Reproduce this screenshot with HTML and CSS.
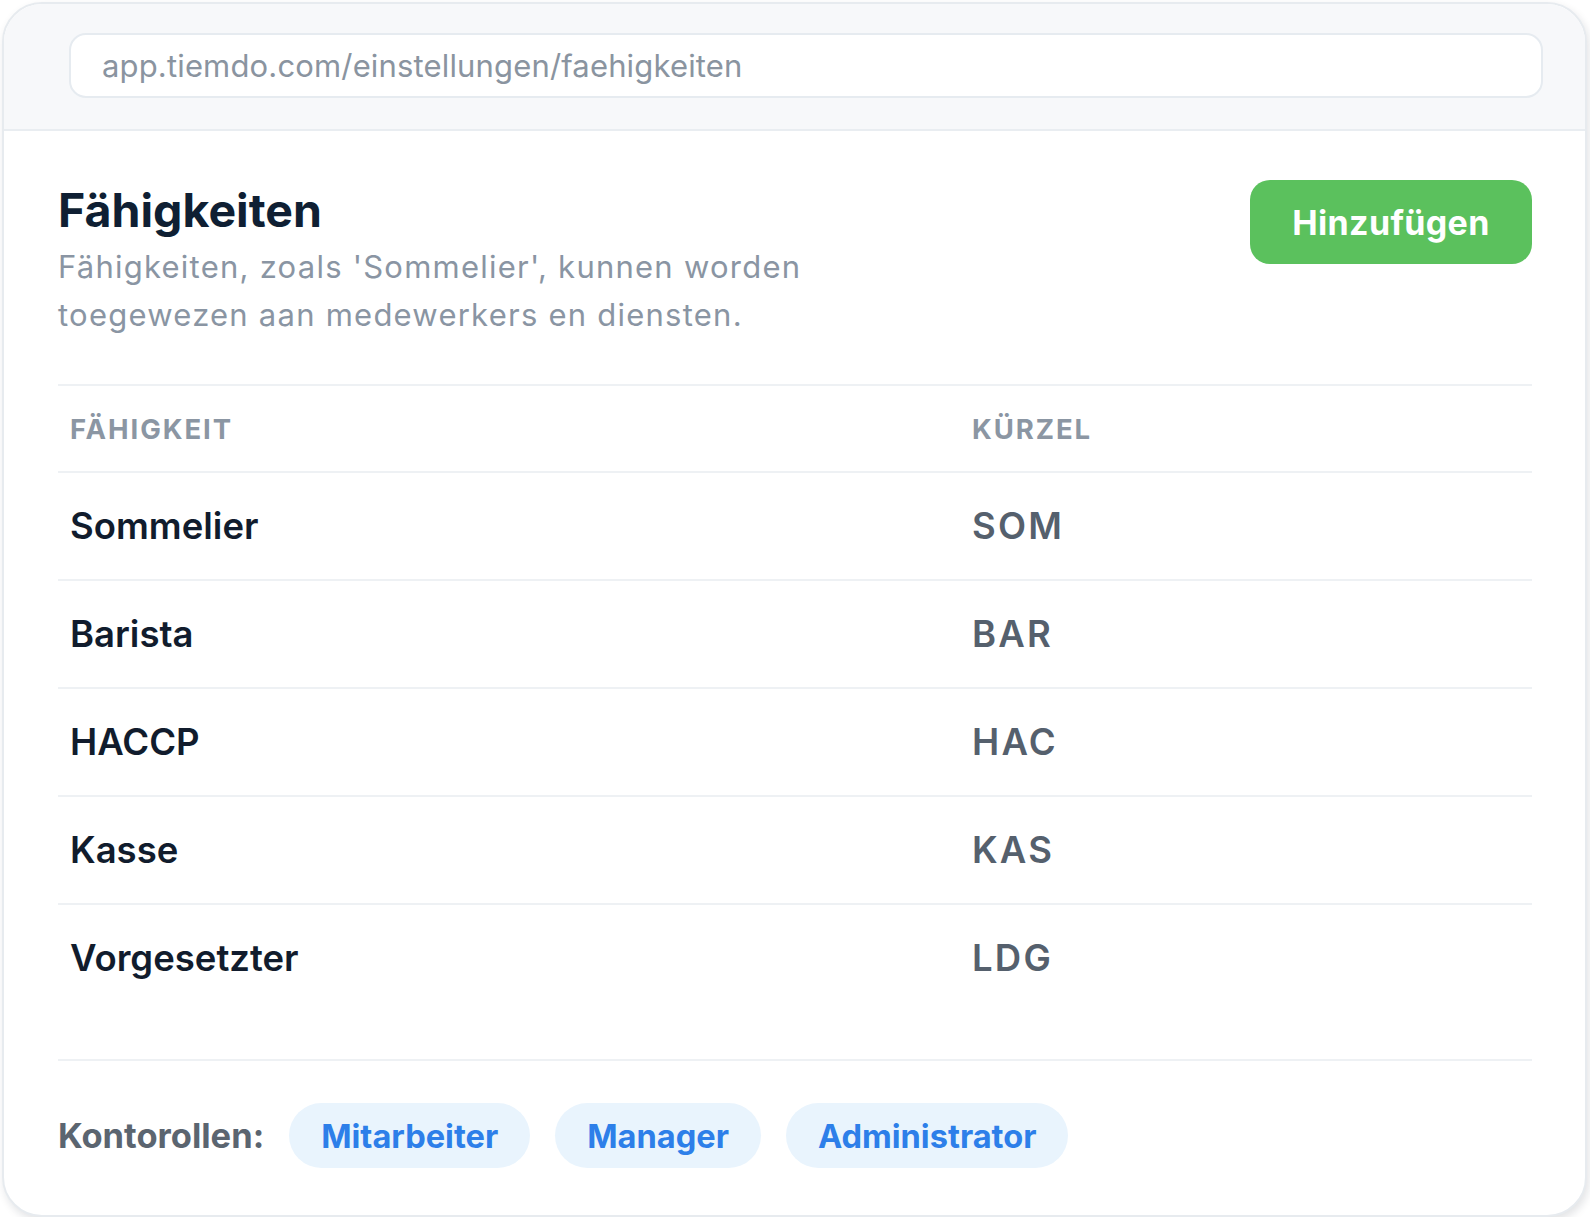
FILE: index.html
```html
<!DOCTYPE html>
<html lang="de">
<head>
    <meta charset="UTF-8">
    <meta name="viewport" content="width=device-width, initial-scale=1.0">
    <title>Fähigkeiten - Tiemdo</title>
    <link rel="stylesheet" href="styles.css">
</head>
<body>

<div class="window">
    <!-- Browser bar -->
    <div class="topbar">
        <div class="url-bar">app.tiemdo.com/einstellungen/faehigkeiten</div>
    </div>

    <div class="content">
        <div class="page-head">
            <div class="head-text">
                <div class="title">Fähigkeiten</div>
                <div class="subtitle">Fähigkeiten, zoals 'Sommelier', kunnen worden<br>toegewezen aan medewerkers en diensten.</div>
            </div>
            <button class="add-button">Hinzufügen</button>
        </div>

        <div class="skills-table">
            <div class="table-row table-head">
                <div class="cell">Fähigkeit</div>
                <div class="cell">Kürzel</div>
            </div>
            <div class="table-row">
                <div class="cell skill-name">Sommelier</div>
                <div class="cell skill-code">SOM</div>
            </div>
            <div class="table-row">
                <div class="cell skill-name">Barista</div>
                <div class="cell skill-code">BAR</div>
            </div>
            <div class="table-row">
                <div class="cell skill-name">HACCP</div>
                <div class="cell skill-code">HAC</div>
            </div>
            <div class="table-row">
                <div class="cell skill-name">Kasse</div>
                <div class="cell skill-code">KAS</div>
            </div>
            <div class="table-row">
                <div class="cell skill-name">Vorgesetzter</div>
                <div class="cell skill-code">LDG</div>
            </div>
        </div>

        <div class="roles">
            <span class="roles-label">Kontorollen:</span>
            <span class="role-pill">Mitarbeiter</span>
            <span class="role-pill">Manager</span>
            <span class="role-pill">Administrator</span>
        </div>
    </div>
</div>

</body>
</html>
```

FILE: styles.css
```css
body {
    margin: 0;
    padding: 2px 3px 0 2px;
    font-family: "Inter", "Liberation Sans", sans-serif;
    background-color: #fff;
}

.window {
    background-color: #fff;
    border: 2px solid #e7ebef;
    border-radius: 40px;
    overflow: hidden;
    box-shadow: 2px 4px 8px rgba(16, 24, 40, 0.12);
}

.topbar {
    background-color: #f7f8fa;
    border-bottom: 2px solid #e9edf1;
    padding: 29px 42px 31px 65px;
}

.url-bar {
    background-color: #fff;
    border: 2px solid #e6ebf0;
    border-radius: 17px;
    height: 61px;
    display: flex;
    align-items: center;
    padding-left: 31px;
    font-size: 31px;
    letter-spacing: 0.005em;
    color: #8a94a0;
}

.content {
    padding: 49px 53px 47px 54px;
}

.page-head {
    display: flex;
    justify-content: space-between;
    align-items: flex-start;
}

.head-text {
    padding-top: 5px;
}

.title {
    font-size: 46.5px;
    line-height: 50px;
    font-weight: 700;
    color: #0f1f33;
}

.subtitle {
    margin-top: 8px;
    font-size: 31px;
    line-height: 48px;
    letter-spacing: 0.04em;
    color: #8a95a3;
}

.add-button {
    background-color: #5bc15d;
    color: #fff;
    border: none;
    border-radius: 20px;
    width: 282px;
    height: 84px;
    font-family: inherit;
    font-size: 34px;
    font-weight: 700;
    letter-spacing: 0.01em;
    cursor: pointer;
}

.skills-table {
    margin-top: 45px;
    border-top: 2px solid #eef1f4;
}

.table-row {
    display: grid;
    grid-template-columns: 902px 1fr;
    align-items: center;
    height: 106px;
    border-bottom: 2px solid #eef1f4;
}

.table-row:last-child {
    border-bottom: none;
}

.table-head {
    height: 85px;
}

.cell {
    padding: 0 12px;
}

.table-head .cell {
    font-size: 27.5px;
    font-weight: 700;
    text-transform: uppercase;
    letter-spacing: 0.07em;
    color: #8b96a3;
}

.skill-name {
    font-size: 36.5px;
    font-weight: 600;
    color: #111c2d;
}

.skill-code {
    font-size: 36.5px;
    font-weight: 600;
    letter-spacing: 0.06em;
    color: #55606d;
}

.roles {
    margin-top: 48px;
    border-top: 2px solid #eef1f4;
    padding-top: 42px;
    display: flex;
    align-items: center;
    gap: 25px;
}

.roles-label {
    font-size: 34.5px;
    font-weight: 700;
    color: #5b6570;
}

.role-pill {
    background-color: #e9f4fd;
    color: #2d7fe9;
    font-size: 32.6px;
    font-weight: 700;
    height: 65px;
    display: flex;
    align-items: center;
    padding: 0 32px;
    border-radius: 33px;
}
```
